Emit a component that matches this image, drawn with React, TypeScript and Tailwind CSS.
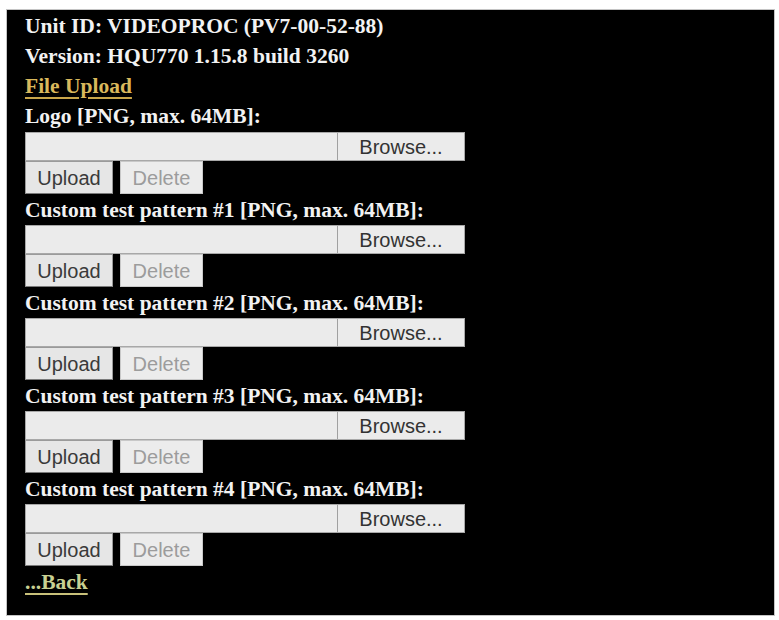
const sections = [
  'Logo [PNG, max. 64MB]:',
  'Custom test pattern #1 [PNG, max. 64MB]:',
  'Custom test pattern #2 [PNG, max. 64MB]:',
  'Custom test pattern #3 [PNG, max. 64MB]:',
  'Custom test pattern #4 [PNG, max. 64MB]:',
];

function UploadBlock({ label, first }: { label: string; first?: boolean }) {
  return (
    <div>
      <div className={`${first ? 'h-[31px] leading-[31px]' : 'h-[31px] leading-[33px]'}`}>{label}</div>
      {/* file input */}
      <div className="flex h-[29px] w-[440px] border border-[#a8a8a8] bg-[#ebebeb] shadow-[0_1px_1px_rgba(0,0,0,0.3)]">
        <div className="flex-1" />
        <div className="flex w-[127px] items-center justify-center border-l border-[#a0a0a0] font-['Liberation_Sans',Arial,sans-serif] text-[20px] font-normal text-[#333]">
          Browse...
        </div>
      </div>
      {/* buttons */}
      <div className="flex h-[33px] gap-[7px]">
        <div className="flex w-[88px] items-center justify-center border border-[#9a9a9a] border-b-[#7a7a7a] bg-[#e6e6e6] font-['Liberation_Sans',Arial,sans-serif] text-[20px] font-normal text-[#3a3a3a]">
          Upload
        </div>
        <div className="flex w-[83px] items-center justify-center border border-[#c8c8c8] bg-[#ececec] font-['Liberation_Sans',Arial,sans-serif] text-[20px] font-normal text-[#9c9c9c]">
          Delete
        </div>
      </div>
    </div>
  );
}

export default function App() {
  return (
    <div className="h-[620px] w-[779px] bg-white pl-[6px] pr-[4px] pt-[9px] pb-[4px]">
      <div className="h-[607px] w-[769px] border border-[#c4c4c4] bg-black pl-[18px] pt-[1px] font-['Liberation_Serif','Times_New_Roman',serif] text-[21.5px] font-bold text-[#f2f2f2]">
        <div className="leading-[30px]">Unit ID: VIDEOPROC (PV7-00-52-88)</div>
        <div className="leading-[30px]">Version: HQU770 1.15.8 build 3260</div>
        <div className="leading-[30px]">
          <a className="text-[#d9b85c] underline decoration-[#c9a64a] decoration-2 underline-offset-[4px]">File Upload</a>
        </div>
        {sections.map((s, i) => (
          <UploadBlock key={s} label={s} first={i === 0} />
        ))}
        <div className="leading-[33px]">
          <a className="text-[#c8d092] underline decoration-[#c8c07a] decoration-2 underline-offset-[4px]">...Back</a>
        </div>
      </div>
    </div>
  );
}
